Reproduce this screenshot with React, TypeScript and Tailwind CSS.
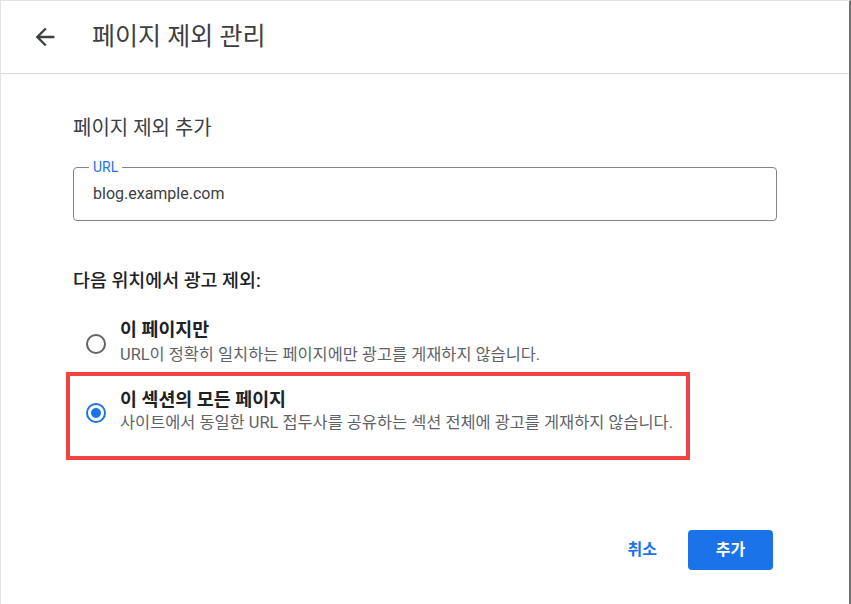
export default function App() {
  return (
    <div className="w-[851px] h-[604px] overflow-hidden bg-white border-t border-l border-[#e3e3e3] border-r-2 border-r-[#707070] font-['Roboto','Noto_Sans_CJK_KR',sans-serif]">
      {/* Header */}
      <header className="h-[73px] border-b border-[#dadce0] flex items-center pl-[30px]">
        <button className="w-[28px] h-[28px] text-[#3c4043]">
          <svg viewBox="0 0 24 24" className="w-[28px] h-[28px]" fill="currentColor">
            <path d="M20 11H7.83l5.59-5.59L12 4l-8 8 8 8 1.41-1.41L7.83 13H20v-2z" />
          </svg>
        </button>
        <h1 className="ml-[33px] text-[25px] leading-[32px] text-[#3c4043]">페이지 제외 관리</h1>
      </header>

      <main className="pl-[72px] pr-[72px]">
        <h2 className="mt-[40px] text-[20px] leading-[28px] text-[#3c4043]">페이지 제외 추가</h2>

        {/* URL field */}
        <div className="relative mt-[25px] h-[54px] border border-[#80868b] rounded-[4px] flex items-center pl-[19px]">
          <span className="absolute -top-[9px] left-[15px] px-1 bg-white text-[14px] leading-[16px] text-[#1a73e8]">
            URL
          </span>
          <span className="text-[16px] text-[#3c4043]">blog.example.com</span>
        </div>

        <p className="mt-[47px] text-[18.4px] leading-[26px] font-medium text-[#202124]">다음 위치에서 광고 제외:</p>

        {/* Option 1 */}
        <div className="mt-[24px] flex">
          <span className="ml-[13px] mt-[16px] w-5 h-5 rounded-full border-2 border-[#5f6368] shrink-0" />
          <div className="ml-[14px]">
            <div className="text-[18.4px] leading-[24px] font-bold text-[#202124]">이 페이지만</div>
            <div className="mt-[2px] text-[16.4px] leading-[22px] text-[#5f6368]">
              URL이 정확히 일치하는 페이지에만 광고를 게재하지 않습니다.
            </div>
          </div>
        </div>

        {/* Option 2 (highlighted) */}
        <div className="mt-[6px] -ml-[7px] w-[624px] border-4 border-[#f44242] flex pl-[16px] pt-[12px] pb-[22px]">
          <span className="mt-[15px] w-5 h-5 rounded-full border-2 border-[#1a73e8] shrink-0 flex items-center justify-center">
            <span className="w-[10px] h-[10px] rounded-full bg-[#1a73e8]" />
          </span>
          <div className="ml-[14px]">
            <div className="text-[18.4px] leading-[24px] font-bold text-[#202124]">이 섹션의 모든 페이지</div>
            <div className="text-[16.4px] leading-[22px] text-[#5f6368]">
              사이트에서 동일한 URL 접두사를 공유하는 섹션 전체에 광고를 게재하지 않습니다.
            </div>
          </div>
        </div>

        {/* Actions */}
        <div className="mt-[70px] mr-[4px] flex justify-end gap-[15px]">
          <button className="h-10 px-4 text-[16px] font-bold text-[#1a73e8] rounded-[4px]">취소</button>
          <button className="h-10 w-[85px] text-[16px] font-bold text-white bg-[#1a73e8] rounded-[4px]">추가</button>
        </div>
      </main>
    </div>
  );
}
